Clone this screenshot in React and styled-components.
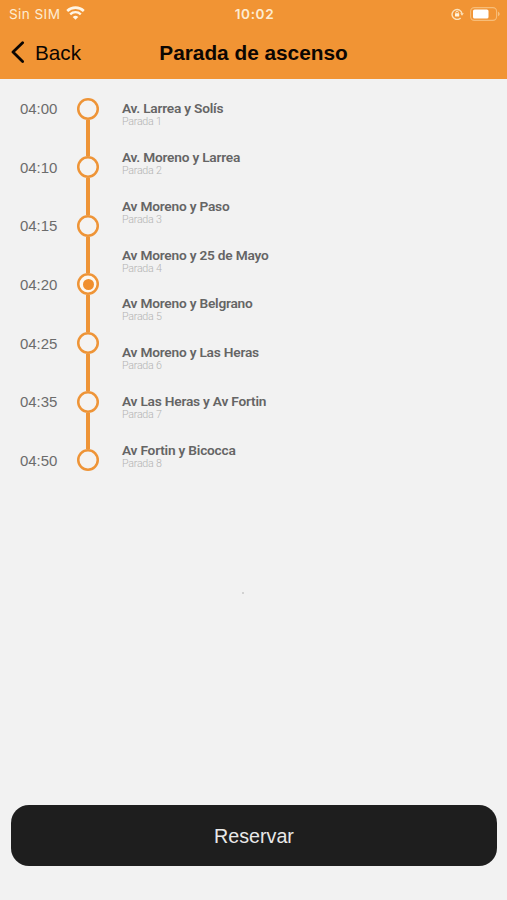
import React from "react";
import styled, { createGlobalStyle, css } from "styled-components";

const GlobalStyle = createGlobalStyle`
  * {
    box-sizing: border-box;
  }

  body {
    margin: 0;
    background-color: #f2f2f2;
  }
`;

const arial = css`
  font-family: "Liberation Sans", Arial, sans-serif;
`;

const Screen = styled.div`
  ${arial}
  height: 900px;
  display: flex;
  flex-direction: column;
  overflow: hidden;
  background-color: #f2f2f2;
`;

const Header = styled.header`
  height: 79px;
  background-color: #f19434;
`;

const StatusBar = styled.div`
  height: 27px;
  display: grid;
  grid-template-columns: 1fr auto 1fr;
  align-items: center;
  padding: 0 7px 0 9px;
  font-family: Inter, sans-serif;
  font-size: 13.6px;
  color: #fdecd2;
`;

const Carrier = styled.div`
  display: flex;
  align-items: center;
  gap: 6px;
  letter-spacing: 0.4px;
`;

const Clock = styled.span`
  font-weight: 600;
  letter-spacing: 0.6px;
`;

const StatusIcons = styled.div`
  display: flex;
  align-items: center;
  justify-content: flex-end;
  gap: 6px;
`;

const NavBar = styled.div`
  height: 52px;
  display: grid;
  grid-template-columns: 1fr auto 1fr;
  align-items: center;
  padding: 0 10px;
`;

const BackButton = styled.button`
  ${arial}
  display: flex;
  align-items: center;
  gap: 10px;
  padding: 0;
  border: none;
  background: none;
  font-size: 20.7px;
  color: #0c0602;
  cursor: pointer;
`;

const Title = styled.h1`
  margin: 0;
  font-size: 20.8px;
  line-height: 24px;
  color: #0c0602;
`;

const Content = styled.main`
  flex: 1;
  display: flex;
  align-items: flex-start;
  padding: 18.5px 20px 0;
`;

const Timeline = styled.ul`
  width: 102px;
  margin: 0;
  padding: 0;
  list-style: none;
`;

const TimelineRow = styled.li`
  height: 58.67px;
  display: grid;
  grid-template-columns: 57px 22px;
  grid-template-rows: 22px 1fr;
  align-items: center;

  &:last-child {
    height: 22px;
  }
`;

const Time = styled.span`
  font-size: 15px;
  line-height: 22px;
  padding-top: 1px;
  letter-spacing: -0.05px;
  color: #6c6c6c;
`;

const Circle = styled.span`
  width: 22px;
  height: 22px;
  display: flex;
  align-items: center;
  justify-content: center;
  border-radius: 50%;
  box-shadow: inset 0 0 0 2.5px #ee9437;
  background-color: ${({ $active }) => ($active ? "#fdf8f1" : "#f4f3f2")};
`;

const Dot = styled.span`
  width: 11px;
  height: 11px;
  border-radius: 50%;
  background-color: #f08f2e;
`;

const Connector = styled.span`
  grid-column: 2;
  justify-self: center;
  width: 4px;
  height: 100%;
  background-color: #ee9437;
`;

const StopList = styled.ul`
  margin: 0;
  padding: 3.5px 0 0;
  list-style: none;
  font-family: Roboto, sans-serif;
`;

const Stop = styled.li`
  height: 48.86px;
`;

const StopName = styled.div`
  font-size: 13.7px;
  font-weight: 600;
  line-height: 15px;
  letter-spacing: -0.21px;
  color: #656565;
`;

const StopLabel = styled.div`
  font-size: 10.7px;
  font-weight: 300;
  line-height: 12px;
  letter-spacing: -0.25px;
  color: #b3b3b3;
`;

const Placeholder = styled.div`
  width: 2px;
  height: 2px;
  margin: 0 auto 211px 242px;
  background-color: #d2d2d2;
`;

const Footer = styled.footer`
  padding: 0 10px 34px 11px;
`;

const ReserveButton = styled.button`
  ${arial}
  display: block;
  width: 100%;
  height: 61px;
  padding: 1px 0 0;
  border: none;
  border-radius: 18px;
  background-color: #1e1e1e;
  font-size: 19.7px;
  color: #e9e9e9;
  cursor: pointer;
`;

const times = ["04:00", "04:10", "04:15", "04:20", "04:25", "04:35", "04:50"];
const selected = "04:20";

const stops = [
  "Av. Larrea y Solís",
  "Av. Moreno y Larrea",
  "Av Moreno y Paso",
  "Av Moreno y 25 de Mayo",
  "Av Moreno y Belgrano",
  "Av Moreno y Las Heras",
  "Av Las Heras y Av Fortin",
  "Av Fortin y Bicocca",
];

const WifiIcon = () => (
  <svg width="19" height="15" viewBox="0 0 19 15" fill="none">
    <path d="M1.2 5a12 12 0 0 1 16.6 0" stroke="#fff6e6" strokeWidth="2.6" />
    <path d="M4.2 8.3a7.6 7.6 0 0 1 10.6 0" stroke="#fff6e6" strokeWidth="2.4" />
    <path d="M6.7 11a4.1 4.1 0 0 1 5.6 0l-2.8 2.8z" fill="#fff6e6" />
  </svg>
);

const LockIcon = () => (
  <svg width="13" height="12" viewBox="0 0 13 12" fill="none">
    <path d="M9.6 10a5 5 0 1 1 1.4-4.4" stroke="#fbe3bd" strokeWidth="1.4" />
    <path d="M9.2 5.3h3.6L11 7.8z" fill="#fbe3bd" />
    <rect x="4" y="5.2" width="4.2" height="3.3" rx="0.5" fill="#fff3dc" />
    <path d="M4.8 5.4v-.8a1.3 1.3 0 0 1 2.6 0v.8" stroke="#fff3dc" strokeWidth="0.8" />
  </svg>
);

const BatteryIcon = () => (
  <svg width="30" height="14" viewBox="0 0 30 14" fill="none">
    <rect x="0.6" y="0.6" width="26" height="12.8" rx="3.8" stroke="#f7bd78" strokeWidth="1.1" />
    <rect x="3" y="2.5" width="15.5" height="9" rx="1.6" fill="#fff" />
    <path d="M28 4.8v4.4c1-.4 1.7-1.2 1.7-2.2S29 5.2 28 4.8z" fill="#f7c17f" />
  </svg>
);

const ChevronIcon = () => (
  <svg width="15" height="24" viewBox="0 0 15 24" fill="none">
    <path
      d="M12.6 1.8L3 11l9.6 9.4"
      stroke="#0c0602"
      strokeWidth="2.8"
      strokeLinecap="round"
      strokeLinejoin="round"
    />
  </svg>
);

export default function App() {
  return (
    <>
      <GlobalStyle />
      <Screen>
        <Header>
          <StatusBar>
            <Carrier>
              Sin SIM
              <WifiIcon />
            </Carrier>
            <Clock>10:02</Clock>
            <StatusIcons>
              <LockIcon />
              <BatteryIcon />
            </StatusIcons>
          </StatusBar>
          <NavBar>
            <BackButton>
              <ChevronIcon />
              Back
            </BackButton>
            <Title>Parada de ascenso</Title>
          </NavBar>
        </Header>
        <Content>
          <Timeline>
            {times.map((time, index) => (
              <TimelineRow key={time}>
                <Time>{time}</Time>
                <Circle $active={time === selected}>
                  {time === selected && <Dot />}
                </Circle>
                {index < times.length - 1 && <Connector />}
              </TimelineRow>
            ))}
          </Timeline>
          <StopList>
            {stops.map((stop, index) => (
              <Stop key={stop}>
                <StopName>{stop}</StopName>
                <StopLabel>Parada {index + 1}</StopLabel>
              </Stop>
            ))}
          </StopList>
        </Content>
        <Placeholder />
        <Footer>
          <ReserveButton>Reservar</ReserveButton>
        </Footer>
      </Screen>
    </>
  );
}
